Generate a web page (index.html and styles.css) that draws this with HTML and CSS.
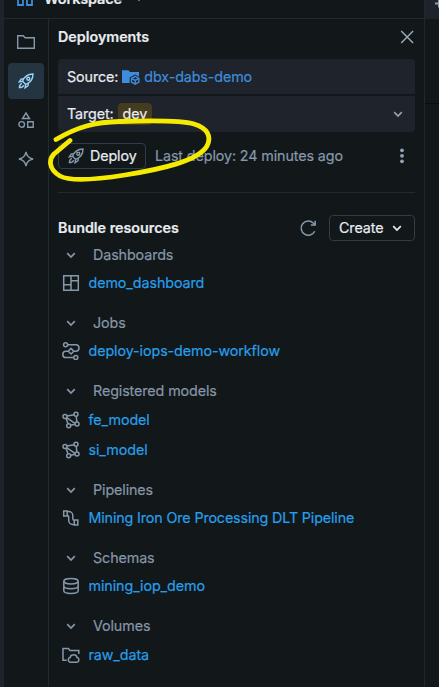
FILE: index.html
```
<!DOCTYPE html>
<html lang="en">
<head>
<meta charset="utf-8">
<title>Deployments</title>
<link rel="stylesheet" href="styles.css">
</head>
<body>
<svg class="defs" width="0" height="0">
  <symbol id="chevron" viewBox="0 0 16 16"><path d="M4.200 6.200 8 10l3.800-3.800" stroke-width="1.7"/></symbol>
  <symbol id="rocket" viewBox="0 0 16 16"><path d="M4.600 8.300C6 4.300 9.300 1 15 1c0 5.700-3.300 9-7.300 10.400zM6 5.800 3.300 5.900 1.200 8.900 4.600 8.300M10.200 10l-.1 2.700-3 2.100.6-3.400M3.800 10.300C2.300 10.800 1.500 12.300 1.400 14.600c2.300-.1 3.800-.9 4.300-2.400"/><circle cx="10.300" cy="5.700" r="1.500"/></symbol>
  <symbol id="model" viewBox="0 0 18 18"><path d="M5 5.100 12.300 3.800M4.600 6.600l8.100 5.500M4 7.300l2 5.500M14.300 5.200l.5 5.700M8.600 14.300l4.400-1"/><circle cx="3" cy="5.500" r="2"/><circle cx="14" cy="3.300" r="2"/><circle cx="6.700" cy="14.700" r="2"/><circle cx="15" cy="12.900" r="2"/></symbol>
</svg>
<div class="app">
  <div class="edge"></div>
  <div class="workspace">
    <header class="topbar">
      <svg class="logo" viewBox="0 0 17 16"><path d="M1 0h5v15H1zM10 0h5v15h-5z"/></svg>
      <span class="title">Workspace</span>
      <svg class="i12 muted" viewBox="0 0 12 12"><path d="m3 4 3 3 3-3"/></svg>
    </header>
    <div class="body">
      <nav class="rail">
        <div class="tab"><svg viewBox="0 0 18 18"><path d="M.7 2.700h5.600l1.800 2.100h9.200v10.500H.7z"/></svg></div>
        <div class="tab active"><svg class="r16"><use href="#rocket"/></svg></div>
        <div class="tab"><svg class="i16" viewBox="0 0 16 16"><path d="m8 1 3.500 5.500h-7zM9.700 9.700h5.500v5.500H9.700z"/><circle cx="3.700" cy="12.400" r="2.800"/></svg></div>
        <div class="tab"><svg class="i16" viewBox="0 0 16 16"><path d="M8 .9c.7 4.200 2.500 6.300 7.100 7.100-4.600.8-6.400 2.900-7.100 7.100C7.300 10.900 5.500 8.800.9 8 5.500 7.200 7.300 5.100 8 .9z"/></svg></div>
      </nav>
      <main class="panel">
        <div class="heading">
          <h1>Deployments</h1>
          <svg class="i16" viewBox="0 0 16 16"><path d="m2.200 2.100 11.900 11.900M14.100 2.100 2.200 14"/></svg>
        </div>
        <div class="field source"><span>Source:</span>
          <svg class="folder" viewBox="0 0 18 16"><path class="solid" d="M0 1.200h6.300L8 3h9v4.700L13.200 5.600 7.700 8.600V14H0z"/><path d="m13.200 7.400 3.700 2v3.800l-3.700 2-3.700-2V9.400zM9.500 9.400l3.700 2 3.700-2M13.200 11.400v3.800" stroke-width="1.4"/></svg>
          <a>dbx-dabs-demo</a></div>
        <div class="field target"><span>Target:</span><span class="badge">dev</span><svg class="i16"><use href="#chevron"/></svg></div>
        <div class="actions">
          <button class="btn deploy"><svg class="r16"><use href="#rocket"/></svg>Deploy</button>
          <span class="last">Last deploy: 24 minutes ago</span>
          <svg class="i16 dots" viewBox="0 0 16 16"><circle cx="8" cy="2.300" r="1.900"/><circle cx="8" cy="7.800" r="1.900"/><circle cx="8" cy="13.300" r="1.900"/></svg>
        </div>
        <div class="resources">
          <h2>Bundle resources</h2>
          <svg class="i18" viewBox="0 0 18 18"><path d="M15.700 12.200A7.100 7.100 0 1 1 14.200 4l2 2M16.200 1.800V6H11.800" stroke-width="1.500"/></svg>
          <button class="btn create">Create<svg class="i16"><use href="#chevron"/></svg></button>
        </div>
        <section class="group">
          <h3><svg class="i16"><use href="#chevron"/></svg>Dashboards</h3>
          <a><svg viewBox="0 0 18 18"><path d="M1.700 1.700h14.600v14.600H1.700zM9 1.700v14.600M1.700 10.700H9M9 6.700h7.300"/></svg><span>demo_dashboard</span></a>
        </section>
        <section class="group">
          <h3><svg class="i16"><use href="#chevron"/></svg>Jobs</h3>
          <a><svg viewBox="0 0 18 18"><circle cx="3.600" cy="2.800" r="2"/><circle cx="13.800" cy="15.600" r="2"/><path d="M5.700 2.800h8.100a3.200 3.200 0 0 1 0 6.400h-2M6.200 9.200H4a3.200 3.200 0 0 0 0 6.400h7.700M9 6.400l2.800 2.800L9 12 6.200 9.200z"/></svg><span>deploy-iops-demo-workflow</span></a>
        </section>
        <section class="group">
          <h3><svg class="i16"><use href="#chevron"/></svg>Registered models</h3>
          <a><svg><use href="#model"/></svg><span>fe_model</span></a>
          <a><svg><use href="#model"/></svg><span>si_model</span></a>
        </section>
        <section class="group">
          <h3><svg class="i16"><use href="#chevron"/></svg>Pipelines</h3>
          <a class="wide"><svg viewBox="0 0 18 18"><path d="M1.700 2h3.500v5H1.700zM12.300 11h3.500v5h-3.500zM5.200 2.600h1.600a4 4 0 0 1 4 4v2.800a2 2 0 0 0 1.500 2M5.200 6.500c1 0 1.500.6 1.500 1.500v3.500a4 4 0 0 0 4 4h1.600"/></svg><span>Mining Iron Ore Processing DLT Pipeline</span></a>
        </section>
        <section class="group">
          <h3><svg class="i16"><use href="#chevron"/></svg>Schemas</h3>
          <a><svg viewBox="0 0 18 18"><ellipse cx="9" cy="4.300" rx="7.200" ry="2.700"/><path d="M1.800 4.300v9.400c0 1.500 3.200 2.700 7.200 2.700s7.200-1.200 7.200-2.700V4.300M1.800 9c0 1.500 3.200 2.700 7.200 2.700s7.200-1.200 7.200-2.700"/></svg><span>mining_iop_demo</span></a>
        </section>
        <section class="group">
          <h3><svg class="i16"><use href="#chevron"/></svg>Volumes</h3>
          <a><svg viewBox="0 0 18 18"><path d="M4.700 14.300H1V2.400h5.300l1.800 2h8.700v3.500M8.300 16.300a2.400 2.400 0 0 1-.2-4.700 3.600 3.600 0 0 1 7 0 2.400 2.400 0 0 1-.2 4.700z"/></svg><span>raw_data</span></a>
        </section>
      </main>
    </div>
  </div>
  <aside class="editor">
    <div class="tabs"><svg viewBox="0 0 12 12"><path d="M5 0v7.500M1 3.500h9" stroke-width="2"/></svg></div>
    <div class="tools"></div>
  </aside>
</div>
<svg class="ink" viewBox="0 0 170 70"><path d="M11 24.500C32 12 50 7 75 6.500C107 5.500 139 6 149 9C162 13 167 21 162 31C153 46 117 54 80 60C55 64 26 67 15 61C3 54 4 44 9 39L25 25.500"/></svg>
</body>
</html>
```
FILE: styles.css
```
* { box-sizing: border-box; }
body { margin: 0; background: #12171a; color: #e8ecf0; font: 14.3px/20px Inter, sans-serif; letter-spacing: -.1px; -webkit-text-stroke: .2px; overflow: hidden; }
svg { display: block; flex: none; width: 18px; height: 18px; fill: none; stroke: currentColor; stroke-width: 1.6; }
.defs { position: absolute; width: 0; height: 0; }
.i12 { width: 12px; height: 12px; }
.i16, .r16 { width: 16px; height: 16px; }
.app { display: flex; height: 687px; }
.edge { width: 4px; background: #1f232b; }
.workspace { width: 421px; display: flex; flex-direction: column; border-right: 1px solid #22272f; }
.topbar { height: 19px; border-bottom: 1px solid #22292f; display: flex; align-items: flex-start; padding-left: 13px; overflow: hidden; }
.logo { width: 17px; height: 16px; margin-top: -10px; stroke: #3c8ddd; stroke-width: 1.8; }
.title { font-weight: 600; font-size: 14.5px; margin: -11px 11px 0 10px; letter-spacing: -.2px; }
.topbar .muted { margin-top: -7px; color: #8696a6; }
.body { display: flex; flex: 1; }
.rail { width: 45px; border-right: 1px solid #22292f; padding: 5px 0 0 4px; display: flex; flex-direction: column; gap: 3px; color: #8699aa; }
.tab { width: 36px; height: 36px; border-radius: 4px; display: flex; align-items: center; justify-content: center; padding-right: 1px; }
.tab svg { stroke-width: 1.4; }
.tab.active { background: #243440; color: #9dd4fa; }
.panel { width: 375px; padding: 0 9px; }
.heading { height: 40px; display: flex; align-items: center; justify-content: space-between; padding-bottom: 4px; }
.heading svg { color: #9badbc; stroke-width: 1.4; }
h1, h2, h3 { margin: 0; font-size: 14.3px; font-weight: 600; line-height: 20px; }
h1, h2 { letter-spacing: 0; }
.field { background: #1f232b; display: flex; align-items: center; padding: 0 9px; }
.source { height: 35px; border-radius: 4px 4px 0 0; }
.source a { color: #3d8ddc; }
.folder { width: 18px; height: 16px; margin: 0 4px; color: #3d8ddc; }
.solid { fill: currentColor; stroke: none; }
.target { height: 36px; margin-top: 2px; border-radius: 0 0 4px 4px; }
.target svg { margin-left: auto; color: #8fa3b5; }
.badge { background: #453b21; border-radius: 4px; padding: 0 5px; margin-left: 4px; height: 22px; line-height: 22px; }
.actions { height: 61px; border-bottom: 1px solid #22292f; display: flex; align-items: flex-start; padding-top: 11px; }
.btn { background: none; color: #e8ecf0; font: inherit; letter-spacing: inherit; border: 1px solid #303d48; border-radius: 4px; height: 26px; padding: 0; display: flex; align-items: center; }
.deploy { width: 88px; padding-left: 9px; gap: 6px; }
.deploy svg { color: #8699aa; stroke-width: 1.4; }
.last { margin: 3px 0 0 9px; color: #8699aa; }
.dots { margin: 5px 5px 0 auto; fill: #8fa3b5; stroke: none; }
.resources { display: flex; height: 48.400px; padding-top: 22px; align-items: flex-start; }
.resources h2 { margin-top: 3px; flex: 1; }
.resources > svg { margin: 4px 12px 0 0; color: #8699aa; }
.create { width: 86px; padding-left: 9px; gap: 6px; }
.group { margin-bottom: 11.500px; }
.group h3 { height: 26.800px; display: flex; align-items: center; font-weight: 400; color: #8696a6; padding-left: 5px; gap: 14px; }
.group a { height: 30px; display: flex; align-items: center; padding-left: 4px; gap: 8.500px; color: #279fe8; letter-spacing: -.08px; }
.group .wide { letter-spacing: -.13px; }
.group a svg { color: #8699aa; stroke-width: 1.5; }
.editor { flex: 1; overflow: hidden; }
.tabs { height: 19px; background: #1f232b; padding-left: 9px; color: #8fa3b5; }
.tabs svg { width: 12px; height: 12px; }
.tools { height: 85px; border-bottom: 1px solid #0a0d10; }
.ink { position: absolute; left: 45px; top: 115px; width: 170px; height: 70px; stroke: #f5eb00; stroke-width: 4.800; stroke-linecap: round; stroke-linejoin: round; }
```
